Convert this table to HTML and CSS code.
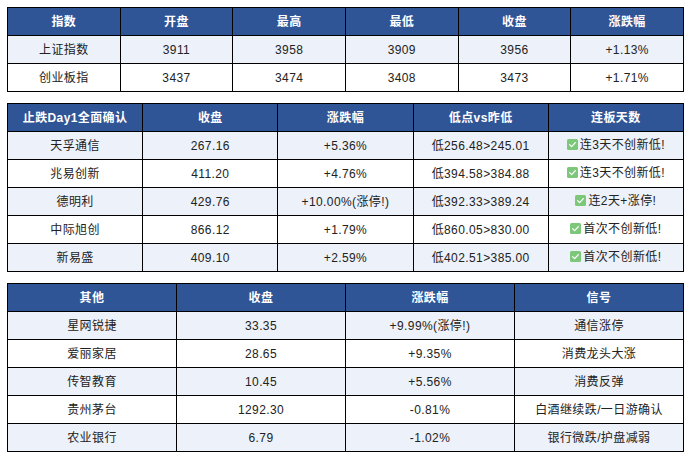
FILE: index.html
```html
<!DOCTYPE html>
<html lang="zh">
<head>
<meta charset="utf-8">
<link rel="stylesheet" href="styles.css">
</head>
<body>
<div class="page">
  <table class="grid">
    <thead>
      <tr><th>指数</th><th>开盘</th><th>最高</th><th>最低</th><th>收盘</th><th>涨跌幅</th></tr>
    </thead>
    <tbody>
      <tr><td>上证指数</td><td>3911</td><td>3958</td><td>3909</td><td>3956</td><td>+1.13%</td></tr>
      <tr><td>创业板指</td><td>3437</td><td>3474</td><td>3408</td><td>3473</td><td>+1.71%</td></tr>
    </tbody>
  </table>

  <table class="grid">
    <thead>
      <tr><th>止跌Day1全面确认</th><th>收盘</th><th>涨跌幅</th><th>低点vs昨低</th><th>连板天数</th></tr>
    </thead>
    <tbody>
      <tr><td>天孚通信</td><td>267.16</td><td>+5.36%</td><td>低256.48&gt;245.01</td><td><span class="ok"><svg class="check" viewBox="0 0 11 11"><rect x="0" y="0" width="11" height="11" rx="1.5"/><path d="M2.6 5.6 L4.6 7.6 L8.4 3.6"/></svg>连3天不创新低!</span></td></tr>
      <tr><td>兆易创新</td><td>411.20</td><td>+4.76%</td><td>低394.58&gt;384.88</td><td><span class="ok"><svg class="check" viewBox="0 0 11 11"><rect x="0" y="0" width="11" height="11" rx="1.5"/><path d="M2.6 5.6 L4.6 7.6 L8.4 3.6"/></svg>连3天不创新低!</span></td></tr>
      <tr><td>德明利</td><td>429.76</td><td>+10.00%(涨停!)</td><td>低392.33&gt;389.24</td><td><span class="ok"><svg class="check" viewBox="0 0 11 11"><rect x="0" y="0" width="11" height="11" rx="1.5"/><path d="M2.6 5.6 L4.6 7.6 L8.4 3.6"/></svg>连2天+涨停!</span></td></tr>
      <tr><td>中际旭创</td><td>866.12</td><td>+1.79%</td><td>低860.05&gt;830.00</td><td><span class="ok"><svg class="check" viewBox="0 0 11 11"><rect x="0" y="0" width="11" height="11" rx="1.5"/><path d="M2.6 5.6 L4.6 7.6 L8.4 3.6"/></svg>首次不创新低!</span></td></tr>
      <tr><td>新易盛</td><td>409.10</td><td>+2.59%</td><td>低402.51&gt;385.00</td><td><span class="ok"><svg class="check" viewBox="0 0 11 11"><rect x="0" y="0" width="11" height="11" rx="1.5"/><path d="M2.6 5.6 L4.6 7.6 L8.4 3.6"/></svg>首次不创新低!</span></td></tr>
    </tbody>
  </table>

  <table class="grid">
    <thead>
      <tr><th>其他</th><th>收盘</th><th>涨跌幅</th><th>信号</th></tr>
    </thead>
    <tbody>
      <tr><td>星网锐捷</td><td>33.35</td><td>+9.99%(涨停!)</td><td>通信涨停</td></tr>
      <tr><td>爱丽家居</td><td>28.65</td><td>+9.35%</td><td>消费龙头大涨</td></tr>
      <tr><td>传智教育</td><td>10.45</td><td>+5.56%</td><td>消费反弹</td></tr>
      <tr><td>贵州茅台</td><td>1292.30</td><td>-0.81%</td><td>白酒继续跌/一日游确认</td></tr>
      <tr><td>农业银行</td><td>6.79</td><td>-1.02%</td><td>银行微跌/护盘减弱</td></tr>
    </tbody>
  </table>
</div>
</body>
</html>
```

FILE: styles.css
```css
html, body {
  margin: 0;
  padding: 0;
  background: #ffffff;
}

.page {
  padding: 7px 8px 0 7px;
  display: flex;
  flex-direction: column;
  gap: 11px;
  font-family: "Liberation Sans", "Noto Sans CJK SC", sans-serif;
  font-size: 12px;
  color: #222222;
}

.grid {
  width: 677px;
  border-collapse: collapse;
  table-layout: fixed;
  border: 1px solid #000000;
}

.grid th,
.grid td {
  border: 1px solid #000000;
  text-align: center;
  vertical-align: middle;
  padding: 0 2px;
  height: 27px;
  line-height: 14px;
  white-space: nowrap;
  letter-spacing: 0.4px;
}

.grid th {
  background: #2f5597;
  color: #ffffff;
  font-weight: bold;
  font-family: "Liberation Sans", "Noto Sans CJK SC", sans-serif;
}

.grid tbody tr:nth-child(odd) td {
  background: #edf1f9;
}

.grid tbody tr:nth-child(even) td {
  background: #ffffff;
}

.ok {
  display: inline-flex;
  align-items: center;
  gap: 2px;
}

.check {
  width: 11px;
  height: 11px;
  flex: none;
}

.check rect {
  fill: #7cc779;
}

.check path {
  fill: none;
  stroke: #ffffff;
  stroke-width: 1.3;
  stroke-linecap: round;
  stroke-linejoin: round;
}
```
